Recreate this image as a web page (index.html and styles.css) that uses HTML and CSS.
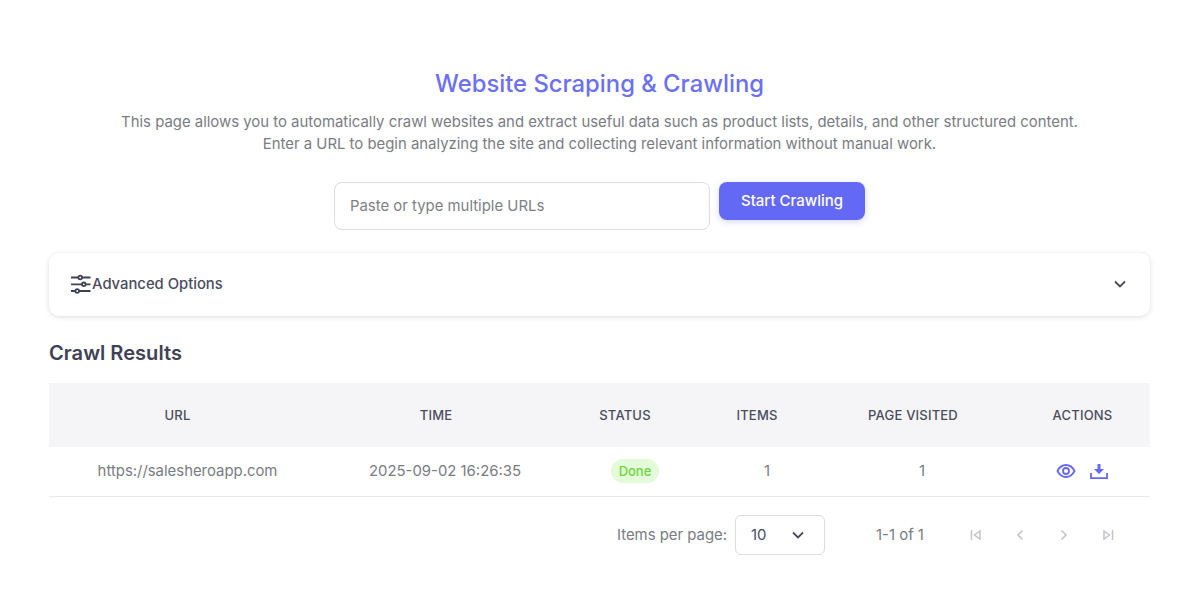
FILE: index.html
```html
<!DOCTYPE html>
<html lang="en">
<head>
<meta charset="utf-8">
<title>Website Scraping &amp; Crawling</title>
<link rel="stylesheet" href="styles.css">
</head>
<body>
<main class="page">
  <h1 class="title">Website Scraping &amp; Crawling</h1>
  <p class="intro">This page allows you to automatically crawl websites and extract useful data such as product lists, details, and other structured content.<br>Enter a URL to begin analyzing the site and collecting relevant information without manual work.</p>
  <div class="form">
    <div class="url-input">Paste or type multiple URLs</div>
    <button class="start">Start Crawling</button>
  </div>
  <section class="options">
    <div class="options-label">
      <svg class="sliders" width="22" height="20" viewBox="0 0 22 20" fill="none" stroke="#3f4257" stroke-width="1.8">
        <path d="M1 3.5h7.5M12 3.5h8.500M1 10.300h11M15.500 10.300h5M1 17h4.500M9 17h11.500"/>
        <circle cx="10.200" cy="3.500" r="1.800"/><circle cx="13.800" cy="10.300" r="1.800"/><circle cx="7.200" cy="17" r="1.800"/>
      </svg>
      <span>Advanced Options</span>
    </div>
    <svg width="12" height="8" viewBox="0 0 12 8" fill="none" stroke="#4a4c5e" stroke-width="1.800"><path d="M1 1.500l5 5 5-5"/></svg>
  </section>
  <h2 class="results-title">Crawl Results</h2>
  <div class="table">
    <div class="row head">
      <div>URL</div><div>TIME</div><div>STATUS</div><div>ITEMS</div><div>PAGE VISITED</div><div>ACTIONS</div>
    </div>
    <div class="row body">
      <div>https://salesheroapp.com</div>
      <div>2025-09-02 16:26:35</div>
      <div><span class="badge">Done</span></div>
      <div>1</div>
      <div>1</div>
      <div class="actions">
        <svg width="20" height="20" viewBox="0 0 20 20" fill="none" stroke="#6469f5" stroke-width="1.800"><path d="M1.500 10C3.500 6 6.500 4 10 4s6.500 2 8.500 6c-2 4-5 6-8.500 6s-6.500-2-8.500-6z"/><circle cx="10" cy="10" r="3"/></svg>
        <svg width="20" height="20" viewBox="0 0 20 20" fill="none"><path d="M2 12v5.200h16V12" stroke="#6469f5" stroke-width="1.800"/><path d="M8.500 3h3v5H15l-5 5-5-5h3.500z" fill="#6469f5"/></svg>
      </div>
    </div>
  </div>
  <div class="pager">
    <span class="per-page">Items per page:</span>
    <div class="select"><span>10</span>
      <svg width="12" height="8" viewBox="0 0 12 8" fill="none" stroke="#4a4c5e" stroke-width="1.800"><path d="M1 1.500l5 5 5-5"/></svg>
    </div>
    <span class="range">1-1 of 1</span>
    <div class="nav">
      <svg width="12" height="12" viewBox="0 0 12 12" fill="none" stroke="#c4c5cb" stroke-width="1.500"><path d="M1.500 1v10M10 2L4.500 6 10 10z"/></svg>
      <svg width="12" height="12" viewBox="0 0 12 12" fill="none" stroke="#c4c5cb" stroke-width="1.600"><path d="M8.500 1.500L4 6l4.500 4.500"/></svg>
      <svg width="12" height="12" viewBox="0 0 12 12" fill="none" stroke="#c4c5cb" stroke-width="1.600"><path d="M3.500 1.500L8 6l-4.500 4.500"/></svg>
      <svg width="12" height="12" viewBox="0 0 12 12" fill="none" stroke="#c4c5cb" stroke-width="1.500"><path d="M10.500 1v10M2 2l5.500 4L2 10z"/></svg>
    </div>
  </div>
</main>
</body>
</html>
```
FILE: styles.css
```css
* { box-sizing: border-box; }
html, body { margin: 0; background: #fff; }
body { font-family: Inter, "Liberation Sans", sans-serif; color: #3f4257; height: 603px; overflow: hidden; }
.page { padding: 68px 50px 0 49px; display: flex; flex-direction: column; }
.title { margin: 0; text-align: center; font-size: 23.8px; line-height: 32px; font-weight: 500; color: #6b70f5; }
.intro { margin: 11px 0 0; text-align: center; font-size: 14.9px; line-height: 22px; color: #7a7c85; }
.form { margin-top: 27px; display: flex; justify-content: center; align-items: flex-start; gap: 9px; }
.url-input { width: 376px; height: 48px; border: 1px solid #dcdde1; border-radius: 8px; padding: 0 15px 1px; display: flex; align-items: center; font-size: 14.9px; color: #7d7f87; }
.start { width: 146px; height: 38px; border: 0; border-radius: 8px; background: #6469f5; color: #fff; padding: 0 0 1px; font: 500 15px Inter, "Liberation Sans", sans-serif; box-shadow: 0 2px 6px rgba(100,105,245,.25); }
.options { margin-top: 23px; height: 63px; border-radius: 10px; background: #fff; box-shadow: 0 1px 5px rgba(40,42,70,.16); padding: 0 24px 2px 21px; display: flex; justify-content: space-between; align-items: center; }
.options-label { display: flex; align-items: center; font-size: 14.8px; font-weight: 500; color: #4a4c5e; }
.results-title { margin: 24px 0 0; font-size: 20.1px; line-height: 26px; font-weight: 600; color: #3f4257; }
.table { margin-top: 17px; }
.row { display: grid; align-items: center; text-align: center; }
.head { grid-template-columns: 257px 260px 118px 146px 166px 154px; height: 64px; background: #f5f5f8; font-size: 13px; font-weight: 500; color: #4a4c5e; letter-spacing: .2px; }
.head > :last-child { padding-left: 19px; }
.body { grid-template-columns: 277px 238px 142px 122px 188px 134px; height: 50px; padding-bottom: 2px; border-bottom: 1px solid #e8e9ec; font-size: 14.9px; color: #7a7c85; }
.badge { display: inline-block; padding: 0 8px; border-radius: 12px; background: #e3fbd8; color: #6fd640; font-size: 13px; font-weight: 500; line-height: 24px; }
.actions { display: flex; justify-content: center; align-items: center; gap: 13px; padding-right: 2px; }
.pager { margin-top: 18px; height: 40px; display: flex; align-items: center; padding-left: 568px; font-size: 14.9px; color: #7a7c85; }
.select { width: 90px; height: 40px; margin-left: 8px; border: 1px solid #dcdde1; border-radius: 6px; padding: 0 20px 1px 15px; display: flex; justify-content: space-between; align-items: center; color: #4a4c5e; }
.range { margin-left: 51px; padding-bottom: 1px; }
.nav { margin-left: 46px; width: 144px; display: flex; justify-content: space-between; align-items: center; padding-bottom: 1px; }
```
